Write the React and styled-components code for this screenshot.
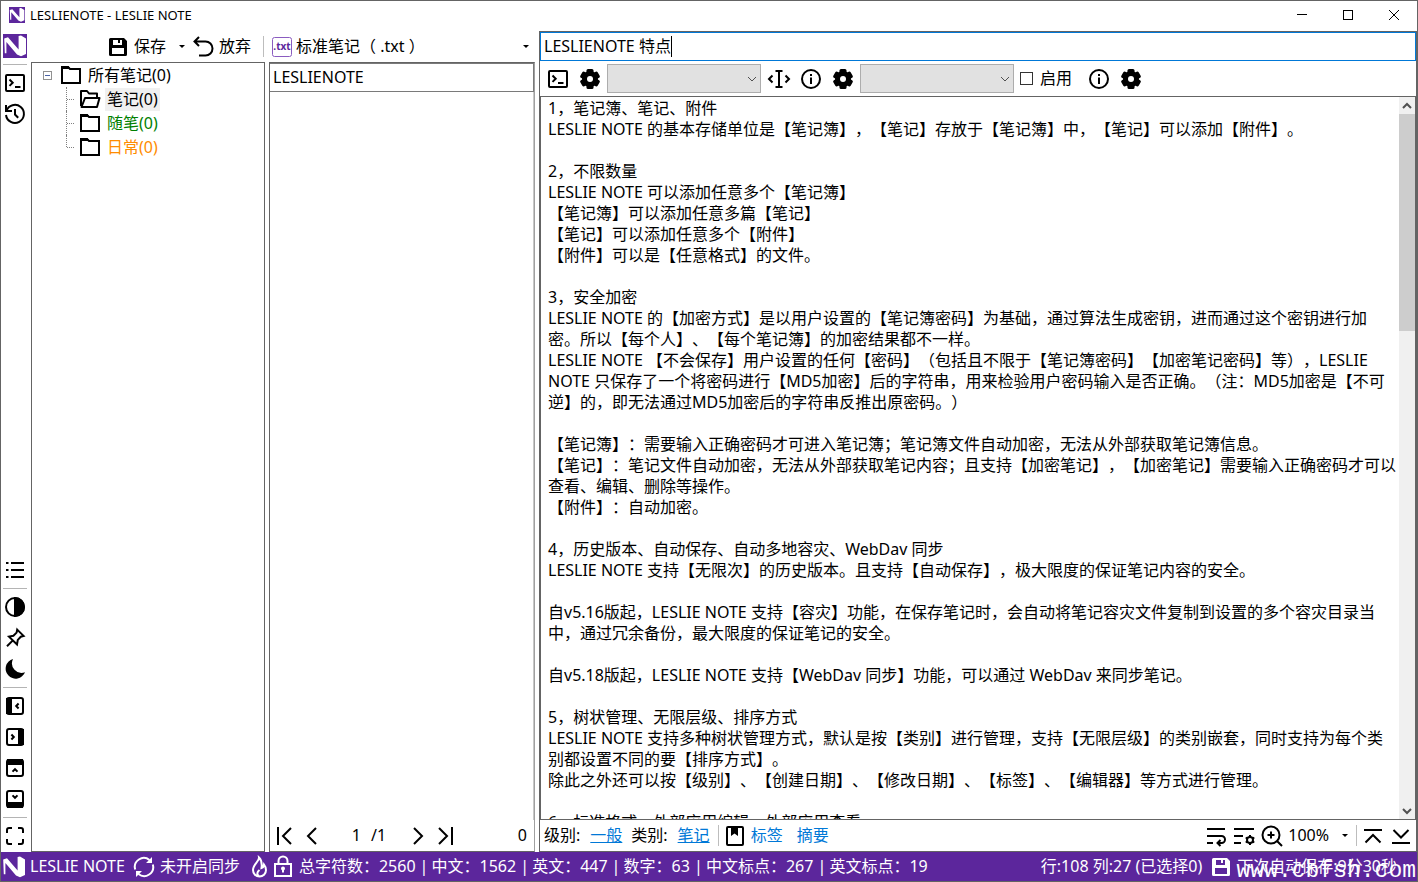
import React, { useState } from "react";
import styled, { createGlobalStyle } from "styled-components";

const NOTE_TEXT = `1，笔记簿、笔记、附件
LESLIE NOTE 的基本存储单位是【笔记簿】，【笔记】存放于【笔记簿】中，【笔记】可以添加【附件】。

2，不限数量
LESLIE NOTE 可以添加任意多个【笔记簿】
【笔记簿】可以添加任意多篇【笔记】
【笔记】可以添加任意多个【附件】
【附件】可以是【任意格式】的文件。

3，安全加密
LESLIE NOTE 的【加密方式】是以用户设置的【笔记簿密码】为基础，通过算法生成密钥，进而通过这个密钥进行加密。所以【每个人】、【每个笔记簿】的加密结果都不一样。
LESLIE NOTE 【不会保存】用户设置的任何【密码】（包括且不限于【笔记簿密码】【加密笔记密码】等），LESLIE NOTE 只保存了一个将密码进行【MD5加密】后的字符串，用来检验用户密码输入是否正确。（注：MD5加密是【不可逆】的，即无法通过MD5加密后的字符串反推出原密码。）

【笔记簿】：需要输入正确密码才可进入笔记簿；笔记簿文件自动加密，无法从外部获取笔记簿信息。
【笔记】：笔记文件自动加密，无法从外部获取笔记内容；且支持【加密笔记】，【加密笔记】需要输入正确密码才可以查看、编辑、删除等操作。
【附件】：自动加密。

4，历史版本、自动保存、自动多地容灾、WebDav 同步
LESLIE NOTE 支持【无限次】的历史版本。且支持【自动保存】，极大限度的保证笔记内容的安全。

自v5.16版起，LESLIE NOTE 支持【容灾】功能，在保存笔记时，会自动将笔记容灾文件复制到设置的多个容灾目录当中，通过冗余备份，最大限度的保证笔记的安全。

自v5.18版起，LESLIE NOTE 支持【WebDav 同步】功能，可以通过 WebDav 来同步笔记。

5，树状管理、无限层级、排序方式
LESLIE NOTE 支持多种树状管理方式，默认是按【类别】进行管理，支持【无限层级】的类别嵌套，同时支持为每个类别都设置不同的要【排序方式】。
除此之外还可以按【级别】、【创建日期】、【修改日期】、【标签】、【编辑器】等方式进行管理。

6，标准格式、外部应用编辑、外部应用查看`;

const Svg = ({ children, size = 24 }) => (
  <svg
    width={size}
    height={size}
    viewBox="0 0 24 24"
    fill="none"
    stroke="currentColor"
    strokeWidth="2"
    aria-hidden="true"
  >
    {children}
  </svg>
);

const LogoIcon = ({ size, bg }) => (
  <svg width={size} height={size} viewBox="0 0 24 24" aria-hidden="true">
    {bg && <rect width="24" height="24" fill="#5c269c" />}
    <path
      d="M1.2 4.6 5 3.2 15.6 15.5V2l2.4-.6 5 3V20l-5 2.2-4-1.8L3.4 8v11.2H1.8z"
      fill="#fff"
    />
  </svg>
);

const TerminalIcon = () => (
  <Svg>
    <rect x="3" y="4" width="18" height="16" rx="1" />
    <path d="m6.5 8.5 3.2 3.2-3.2 3.2M12 16h5.5" />
  </Svg>
);

const HistoryIcon = () => (
  <Svg>
    <path d="M3.4 9A9 9 0 1 1 3 13M3 3v6h6M12 7v5.5l3.2 3.2" />
  </Svg>
);

const ListIcon = () => (
  <Svg>
    <path d="M8 5h13M8 12h13M8 19h13M3 5h2.5M3 12h2.5M3 19h2.5" />
  </Svg>
);

const ContrastIcon = () => (
  <Svg>
    <circle cx="12" cy="12" r="9" />
    <path d="M12 3a9 9 0 0 1 0 18z" fill="currentColor" />
  </Svg>
);

const PinIcon = () => (
  <Svg>
    <path d="m14.2 3.6 6.4 6.3-2.8.8-3 3.2-.8 4.5L6 10.6l4.4-.8 3.2-3.2zM9.6 14.6 4 20.2" />
  </Svg>
);

const MoonIcon = () => (
  <Svg>
    <path
      d="M10 2A10 10 0 1 0 22 15.2 9.6 9.6 0 0 1 10 2z"
      fill="currentColor"
      stroke="none"
    />
  </Svg>
);

const PanelIcon = ({ turn = 0 }) => (
  <Svg>
    <g transform={`rotate(${turn} 12 12)`}>
      <rect x="4" y="4" width="16" height="16" rx="2" />
      <path d="M4 5h4v14H4z" fill="currentColor" />
      <path d="m15.6 9.5-2.4 2.5 2.4 2.5" />
    </g>
  </Svg>
);

const FullscreenIcon = () => (
  <Svg>
    <path d="M4 9V6q0-2 2-2h3M15 4h3q2 0 2 2v3M20 15v3q0 2-2 2h-3M9 20H6q-2 0-2-2v-3" />
  </Svg>
);

const SaveIcon = () => (
  <Svg>
    <path
      d="M4.5 3H18l3 3v13.5q0 1.5-1.5 1.5h-15Q3 21 3 19.5v-15Q3 3 4.5 3zM7 5v5h9V5h-2v3h-2V5zM6 13v6h12v-6z"
      fill="currentColor"
      fillRule="evenodd"
      stroke="none"
    />
  </Svg>
);

const UndoIcon = () => (
  <Svg>
    <path d="M8 2 3.500 6.500 8 11M4 6.500h10.500a7 7 0 0 1 0 14H8" />
  </Svg>
);

const TxtIcon = () => (
  <svg width="20" height="20" viewBox="0 0 20 20" aria-hidden="true">
    <rect x="0.5" y="0.5" width="19" height="19" rx="2" fill="#fff" stroke="#8a5cc0" />
    <text
      x="10"
      y="13"
      textAnchor="middle"
      fontFamily="Noto Sans, sans-serif"
      fontSize="10"
      fontWeight="700"
      fill="#5c269c"
    >
      .txt
    </text>
  </svg>
);

const FolderIcon = () => (
  <Svg>
    <path d="M3 4h6l2 2h10v14H3z" />
    <path d="M2 3h7.5l2 3H2z" fill="currentColor" stroke="none" />
  </Svg>
);

const FolderOpenIcon = () => (
  <Svg>
    <path d="M3 19V4h6l2 2.500h8V10M3.500 20 7 11h14.500L19 20z" strokeLinejoin="round" />
  </Svg>
);

const GearIcon = () => (
  <Svg>
    <g fill="currentColor" stroke="none">
      <circle cx="12" cy="12" r="8" />
      <rect x="8.5" y="2" width="7" height="20" rx="1.5" />
      <rect x="8.5" y="2" width="7" height="20" rx="1.5" transform="rotate(60 12 12)" />
      <rect x="8.5" y="2" width="7" height="20" rx="1.5" transform="rotate(120 12 12)" />
    </g>
    <circle cx="12" cy="12" r="3" fill="#fff" stroke="none" />
  </Svg>
);

const CursorIcon = () => (
  <Svg>
    <path d="M8.5 4h7M8.5 20h7M12 4v16M5.5 8.5 2 12l3.5 3.5M18.5 8.5 22 12l-3.5 3.5" />
  </Svg>
);

const InfoIcon = () => (
  <Svg>
    <circle cx="12" cy="12" r="9" />
    <path d="M12 10.5V17M12 7v2" />
  </Svg>
);

const BookmarkIcon = () => (
  <Svg>
    <rect x="4" y="3" width="16" height="18" rx="1" />
    <path d="M8 3h7v9l-3.5-2.5L8 12z" fill="currentColor" stroke="none" />
  </Svg>
);

const WrapIcon = () => (
  <Svg>
    <path d="M3 5h18M3 12h14.5a3.5 3.5 0 0 1 0 7H14M3 19h6M16.5 16l-3 3 3 3" />
  </Svg>
);

const WrapSettingsIcon = () => (
  <Svg>
    <path d="M2 5h20M2 12h9M2 19h7" />
    <circle cx="18" cy="16" r="3" />
    <path d="M18 11v2M18 19v2M13.7 13.5l1.7 1M20.6 17.500l1.7 1M13.7 18.500l1.7-1M20.600 14.500l1.700-1" />
  </Svg>
);

const ZoomInIcon = () => (
  <Svg>
    <circle cx="11" cy="11" r="8.5" />
    <path d="m17 17 5 5M11 7.5v7M7.5 11h7" />
  </Svg>
);

const ToTopIcon = () => (
  <Svg>
    <path d="M3 6h18M4.5 18.5 12 11l7.5 7.5" />
  </Svg>
);

const ToBottomIcon = () => (
  <Svg>
    <path d="M3 19h18M4.5 6l7.5 7.5L19.5 6" />
  </Svg>
);

const ArrowIcon = ({ back, end }) => (
  <Svg>
    <g transform={back ? "rotate(180 12 12)" : undefined}>
      <path d={end ? "m5 4 8 8-8 8M18 3v18" : "m8 4 8 8-8 8"} />
    </g>
  </Svg>
);

const SyncIcon = () => (
  <Svg>
    <path d="M3.2 14.5A9 9 0 0 1 17.5 5M20.8 9.5A9 9 0 0 1 6.5 19" />
    <path d="M20 2v6h-6zM4 22v-6h6z" fill="currentColor" stroke="none" />
  </Svg>
);

const FireIcon = () => (
  <Svg>
    <path d="M12 2.5c.5 4-6 6.5-6 12.5 0 4 3 6.5 6.5 6.5s6.5-2.5 6.5-6.5c0-2-.8-4-2-5.5-.3 2-1 3-2.5 3.5.5-3.5.2-8-2.5-10.5zM12 21c-2.5-1.5-2-4 .5-6" />
  </Svg>
);

const LockIcon = () => (
  <Svg>
    <rect x="4" y="9" width="16" height="12" />
    <path d="M7.5 9V6a4.5 4.5 0 0 1 9 0v3M12 13v4.5" />
    <circle cx="12" cy="13.5" r="1" />
  </Svg>
);

const Chevron = ({ up }) => (
  <svg width="10" height="10" viewBox="0 0 10 10" fill="none" stroke="#505050" aria-hidden="true">
    <path d={up ? "M1 7l4-4 4 4" : "M1 3l4 4 4-4"} strokeWidth={up === undefined ? 1 : 2} />
  </svg>
);

const categories = [
  { name: "笔记(0)", color: "#000", open: true },
  { name: "随笔(0)", color: "#008000" },
  { name: "日常(0)", color: "#ff8c00" },
];

const stats = [
  "总字符数：2560",
  "中文：1562",
  "英文：447",
  "数字：63",
  "中文标点：267",
  "英文标点：19",
];

const App = () => {
  const [title, setTitle] = useState("LESLIENOTE 特点");
  const [note, setNote] = useState(NOTE_TEXT);
  const [page, setPage] = useState("1");

  return (
    <Window>
      <GlobalStyle />
      <TitleBar>
        <LogoIcon size={16} bg />
        <WindowTitle>LESLIENOTE - LESLIE NOTE</WindowTitle>
        <WindowButton aria-label="最小化">
          <svg width="10" height="10" stroke="#000">
            <path d="M0 4.5h10" />
          </svg>
        </WindowButton>
        <WindowButton aria-label="最大化">
          <svg width="10" height="10" stroke="#000" fill="none">
            <rect x="0.5" y="0.5" width="9" height="9" />
          </svg>
        </WindowButton>
        <WindowButton aria-label="关闭">
          <svg width="10" height="10" stroke="#000">
            <path d="M0 0l10 10M10 0 0 10" />
          </svg>
        </WindowButton>
      </TitleBar>

      <Body>
        <Rail>
          <LogoButton aria-label="LESLIE NOTE">
            <LogoIcon size={24} bg />
          </LogoButton>
          <RailLine />
          <RailButton aria-label="命令"><TerminalIcon /></RailButton>
          <RailButton aria-label="历史"><HistoryIcon /></RailButton>
          <Spacer />
          <RailButton aria-label="列表"><ListIcon /></RailButton>
          <RailLine />
          <RailButton aria-label="对比度"><ContrastIcon /></RailButton>
          <RailButton aria-label="置顶"><PinIcon /></RailButton>
          <RailButton aria-label="夜间"><MoonIcon /></RailButton>
          <RailLine />
          <RailButton aria-label="左栏"><PanelIcon /></RailButton>
          <RailButton aria-label="右栏"><PanelIcon turn={180} /></RailButton>
          <RailButton aria-label="上栏"><PanelIcon turn={90} /></RailButton>
          <RailButton aria-label="下栏"><PanelIcon turn={270} /></RailButton>
          <RailLine />
          <RailButton aria-label="全屏"><FullscreenIcon /></RailButton>
        </Rail>

        <Browser>
          <MainToolbar>
            <ToolButton><SaveIcon />保存</ToolButton>
            <CaretButton aria-label="保存选项"><Caret /></CaretButton>
            <ToolButton><UndoIcon />放弃</ToolButton>
            <Divider />
            <TypeButton><TxtIcon />标准笔记（ .txt ）</TypeButton>
            <CaretButton aria-label="笔记类型"><Caret /></CaretButton>
          </MainToolbar>
          <Panels>
            <TreePanel>
              <TreeRow>
                <Expander aria-label="折叠" />
                <FolderIcon />
                <TreeLabel>所有笔记(0)</TreeLabel>
              </TreeRow>
              <TreeList>
                {categories.map((c, i) => (
                  <TreeItem key={c.name}>
                    <Branch $last={i === categories.length - 1} />
                    {c.open ? <FolderOpenIcon /> : <FolderIcon />}
                    <TreeLabel $color={c.color} $selected={c.open}>{c.name}</TreeLabel>
                  </TreeItem>
                ))}
              </TreeList>
            </TreePanel>
            <ListPanel>
              <ListInput aria-label="笔记簿" defaultValue="LESLIENOTE" />
              <ListBody />
              <Pager>
                <IconButton aria-label="首页"><ArrowIcon back end /></IconButton>
                <IconButton aria-label="上一页"><ArrowIcon back /></IconButton>
                <PageInput
                  aria-label="页码"
                  value={page}
                  onChange={(e) => setPage(e.target.value)}
                />
                <PageTotal>/1</PageTotal>
                <IconButton aria-label="下一页"><ArrowIcon /></IconButton>
                <IconButton aria-label="末页"><ArrowIcon end /></IconButton>
                <PageCount>0</PageCount>
              </Pager>
            </ListPanel>
          </Panels>
        </Browser>

        <Editor>
          <TitleField>
            <TitleInput
              aria-label="标题"
              value={title}
              onChange={(e) => setTitle(e.target.value)}
            />
            <TextCaret />
          </TitleField>
          <EditorToolbar>
            <IconButton aria-label="命令"><TerminalIcon /></IconButton>
            <IconButton aria-label="命令设置"><GearIcon /></IconButton>
            <SelectBox>
              <Select aria-label="命令列表" disabled><option /></Select>
              <SelectArrow><Chevron /></SelectArrow>
            </SelectBox>
            <IconButton aria-label="插入"><CursorIcon /></IconButton>
            <IconButton aria-label="说明"><InfoIcon /></IconButton>
            <IconButton aria-label="设置"><GearIcon /></IconButton>
            <SelectBox>
              <Select aria-label="模板" disabled><option /></Select>
              <SelectArrow><Chevron /></SelectArrow>
            </SelectBox>
            <CheckLabel>
              <Check type="checkbox" />
              启用
            </CheckLabel>
            <IconButton aria-label="启用说明"><InfoIcon /></IconButton>
            <IconButton aria-label="启用设置"><GearIcon /></IconButton>
          </EditorToolbar>
          <TextRow>
            <NoteArea
              aria-label="内容"
              spellCheck={false}
              value={note}
              onChange={(e) => setNote(e.target.value)}
            />
            <ScrollTrack>
              <ScrollButton aria-label="向上"><Chevron up /></ScrollButton>
              <ScrollThumb />
              <Spacer />
              <ScrollButton aria-label="向下"><Chevron up={false} /></ScrollButton>
            </ScrollTrack>
          </TextRow>
          <EditorFooter>
            <FooterText>级别:</FooterText>
            <FooterLink href="#level">一般</FooterLink>
            <FooterText>类别:</FooterText>
            <FooterLink href="#category">笔记</FooterLink>
            <Divider />
            <BookmarkIcon />
            <FooterLink href="#tags" $plain>标签</FooterLink>
            <FooterLink href="#summary" $plain $spaced>摘要</FooterLink>
            <Spacer />
            <FooterTools>
              <IconButton aria-label="换行"><WrapIcon /></IconButton>
              <IconButton aria-label="换行设置"><WrapSettingsIcon /></IconButton>
              <IconButton aria-label="放大"><ZoomInIcon /></IconButton>
            </FooterTools>
            <ZoomButton>100%<Caret /></ZoomButton>
            <Divider />
            <FooterTools>
              <IconButton aria-label="顶部"><ToTopIcon /></IconButton>
              <IconButton aria-label="底部"><ToBottomIcon /></IconButton>
            </FooterTools>
          </EditorFooter>
        </Editor>
      </Body>

      <StatusBar>
        <StatusItem><LogoIcon size={24} />LESLIE NOTE</StatusItem>
        <StatusItem><SyncIcon />未开启同步</StatusItem>
        <StatusItem $tight><FireIcon /></StatusItem>
        <StatusItem>
          <LockIcon />
          {stats.map((s, i) => (
            <React.Fragment key={s}>
              {i > 0 && <StatSeparator>|</StatSeparator>}
              <span>{s}</span>
            </React.Fragment>
          ))}
        </StatusItem>
        <Spacer />
        <StatusItem>行:108 列:27 (已选择0)</StatusItem>
        <StatusItem $end><SaveIcon />下次自动保存:9分30秒</StatusItem>
        <SiteMark>www.cbfsh.com</SiteMark>
      </StatusBar>
    </Window>
  );
};

export default App;

const GlobalStyle = createGlobalStyle`
  * {
    box-sizing: border-box;
  }

  body {
    margin: 0;
    background: #fff;
    text-spacing-trim: space-all;
  }

  body, button, input, textarea, select {
    font-family: "Noto Sans", "Noto Sans CJK SC", sans-serif;
    font-size: 16px;
    line-height: 21px;
    color: #000;
  }

  button {
    padding: 0;
    border: 0;
    background: none;
  }

  svg {
    display: block;
    flex: none;
  }
`;

const Window = styled.div`
  display: flex;
  flex-direction: column;
  height: 100vh;
  border: 1px solid #646464;
  overflow: hidden;
`;

const TitleBar = styled.header`
  display: flex;
  align-items: center;
  height: 30px;
  flex: none;
  padding: 0 0 2px 8px;
`;

const WindowTitle = styled.h1`
  flex: 1;
  margin: 0 0 0 5px;
  font-size: 13px;
  font-weight: 400;
`;

const WindowButton = styled.button`
  display: flex;
  align-items: center;
  justify-content: center;
  width: 46px;
  height: 28px;
`;

const Body = styled.main`
  display: flex;
  flex: 1;
  min-height: 0;
`;

const Spacer = styled.div`
  flex: 1;
`;

const Rail = styled.nav`
  display: flex;
  flex-direction: column;
  align-items: center;
  width: 30px;
  flex: none;
  padding: 0 2px 1px 0;
`;

const RailButton = styled.button`
  display: flex;
  align-items: center;
  justify-content: center;
  width: 28px;
  height: 31px;
  flex: none;
`;

const LogoButton = styled(RailButton)`
  height: 30px;
`;

const RailLine = styled.div`
  width: 24px;
  height: 1px;
  flex: none;
  margin: 3px 0 2px;
  background: #b4b4b4;
`;

const Browser = styled.section`
  display: flex;
  flex-direction: column;
  width: 504px;
  flex: none;
`;

const MainToolbar = styled.div`
  display: flex;
  align-items: center;
  height: 31px;
  flex: none;
  padding-left: 75px;
`;

const ToolButton = styled.button`
  display: flex;
  align-items: center;
  gap: 4px;
`;

const TypeButton = styled(ToolButton)`
  flex: 1;
  padding-left: 8px;
`;

const CaretButton = styled.button`
  display: flex;
  justify-content: center;
  width: 16px;
  margin: 0 1px 0 8px;
  padding: 8px 0;
`;

const Caret = styled.span`
  border: 3px solid transparent;
  border-top-color: #000;
  border-bottom: 0;
`;

const Divider = styled.span`
  width: 1px;
  height: 21px;
  margin: 0 0 0 12px;
  background: #bdbdbd;
`;

const Panels = styled.div`
  display: flex;
  flex: 1;
  gap: 4px;
  min-height: 0;
`;

const TreePanel = styled.div`
  width: 234px;
  padding-left: 11px;
  border: 1px solid #646464;
`;

const TreeRow = styled.div`
  display: flex;
  align-items: center;
  height: 24px;
`;

const Expander = styled.button`
  width: 9px;
  height: 9px;
  margin-right: 7px;
  border: 1px solid #919191;
  background: linear-gradient(#4b63a7, #4b63a7) center / 5px 1px no-repeat #fff;
`;

const TreeList = styled.ul`
  margin: 0;
  padding: 0 0 0 23px;
  list-style: none;
`;

const TreeItem = styled.li`
  display: flex;
  align-items: center;
  height: 24px;
`;

const Branch = styled.span`
  align-self: flex-start;
  width: 12px;
  height: ${({ $last }) => ($last ? "12px" : "24px")};
  border-left: 1px dotted #808080;

  &::before {
    content: "";
    display: block;
    width: 7px;
    height: 12px;
    border-bottom: 1px dotted #808080;
  }
`;

const TreeLabel = styled.span`
  margin-left: 3px;
  padding: 1px 2px;
  color: ${({ $color }) => $color || "#000"};
  background: ${({ $selected }) => ($selected ? "#f0f0f0" : "transparent")};
`;

const ListPanel = styled.div`
  display: flex;
  flex-direction: column;
  flex: 1;
  min-width: 0;
  border: 1px solid #646464;
  border-right-color: #a0a0a0;
`;

const ListInput = styled.input`
  width: 100%;
  height: 29px;
  padding: 0 3px 2px;
  border: 1px solid #7a7a7a;
  border-left: 0;
  outline: 0;
`;

const ListBody = styled.div`
  flex: 1;
  border-right: 1px solid #c8c8c8;
`;

const Pager = styled.div`
  display: flex;
  align-items: center;
  height: 31px;
  gap: 4px;
  padding: 0 7px 0 2px;
`;

const PageInput = styled.input`
  width: 39px;
  padding: 0 6px 0 0;
  border: 0;
  outline: 0;
  text-align: right;
`;

const PageTotal = styled.span`
  width: 31px;
`;

const PageCount = styled.span`
  flex: 1;
  text-align: right;
`;

const IconButton = styled.button`
  display: flex;
  align-items: center;
  justify-content: center;
  width: 24px;
  height: 24px;
  flex: none;
`;

const Editor = styled.section`
  display: flex;
  flex-direction: column;
  flex: 1;
  min-width: 0;
  margin-left: 4px;
  border: 1px solid #646464;
`;

const TitleField = styled.div`
  display: flex;
  align-items: center;
  height: 29px;
  flex: none;
  padding-left: 3px;
  border: 1px solid #0078d7;
`;

const TitleInput = styled.input`
  field-sizing: content;
  padding: 0;
  border: 0;
  outline: 0;
`;

const TextCaret = styled.span`
  width: 1px;
  height: 21px;
  background: #000;
`;

const EditorToolbar = styled.div`
  display: flex;
  align-items: center;
  gap: 8px;
  height: 35px;
  flex: none;
  padding-left: 6px;
`;

const SelectBox = styled.div`
  display: grid;
  align-items: center;
  width: 154px;
  margin: 0 -2px 0 -3px;
`;

const Select = styled.select`
  grid-area: 1 / 1;
  appearance: none;
  width: 100%;
  height: 29px;
  border: 1px solid #adadad;
  border-radius: 0;
  background: #e1e1e1;
  opacity: 1;
`;

const SelectArrow = styled.span`
  grid-area: 1 / 1;
  justify-self: end;
  padding-right: 4px;
  pointer-events: none;
`;

const CheckLabel = styled.label`
  display: flex;
  align-items: center;
  gap: 7px;
  margin-right: 7px;
`;

const Check = styled.input`
  appearance: none;
  width: 13px;
  height: 13px;
  margin: 0;
  border: 1px solid #333;
`;

const TextRow = styled.div`
  display: flex;
  flex: 1;
  min-height: 0;
  border: 1px solid #646464;
`;

const NoteArea = styled.textarea`
  flex: 1;
  min-width: 0;
  padding: 1px 0 0 7px;
  border: 0;
  outline: 0;
  resize: none;
  overflow: hidden;
`;

const ScrollTrack = styled.div`
  display: flex;
  flex-direction: column;
  width: 16px;
  background: #f0f0f0;
`;

const ScrollButton = styled.button`
  display: flex;
  align-items: center;
  justify-content: center;
  height: 17px;
`;

const ScrollThumb = styled.div`
  height: 30%;
  background: #cdcdcd;
`;

const EditorFooter = styled.div`
  display: flex;
  align-items: center;
  height: 31px;
  flex: none;
  padding: 0 3px 0 4px;

  ${Divider} {
    margin: 0 4px 0 8px;
  }
`;

const FooterText = styled.span`
  margin-right: 10px;
`;

const FooterLink = styled.a`
  margin-right: ${({ $plain }) => ($plain ? "0" : "9px")};
  margin-left: ${({ $plain, $spaced }) => ($spaced ? "14px" : $plain ? "4px" : "0")};
  color: #0078d7;
  text-decoration: ${({ $plain }) => ($plain ? "none" : "underline")};

  &:has(+ ${Divider}) {
    margin-right: 0;
  }
`;

const FooterTools = styled.div`
  display: flex;
  gap: 4px;
`;

const ZoomButton = styled.button`
  display: flex;
  align-items: center;
  gap: 13px;
  margin-left: 4px;
`;

const StatusBar = styled.footer`
  position: relative;
  display: flex;
  align-items: center;
  height: 29px;
  flex: none;
  padding-left: 1px;
  color: #fff;
  background: #5c269c;
`;

const StatusItem = styled.span`
  display: flex;
  align-items: center;
  gap: 4px;
  margin-right: ${({ $tight, $end }) => ($tight ? "0" : $end ? "20px" : "7px")};
  white-space: nowrap;
`;

const StatSeparator = styled.span`
  width: 8px;
  text-align: center;
`;

const SiteMark = styled.span`
  position: absolute;
  right: 1px;
  bottom: 0;
  font-family: "Liberation Mono", monospace;
  font-size: 23px;
  line-height: 20px;
`;
